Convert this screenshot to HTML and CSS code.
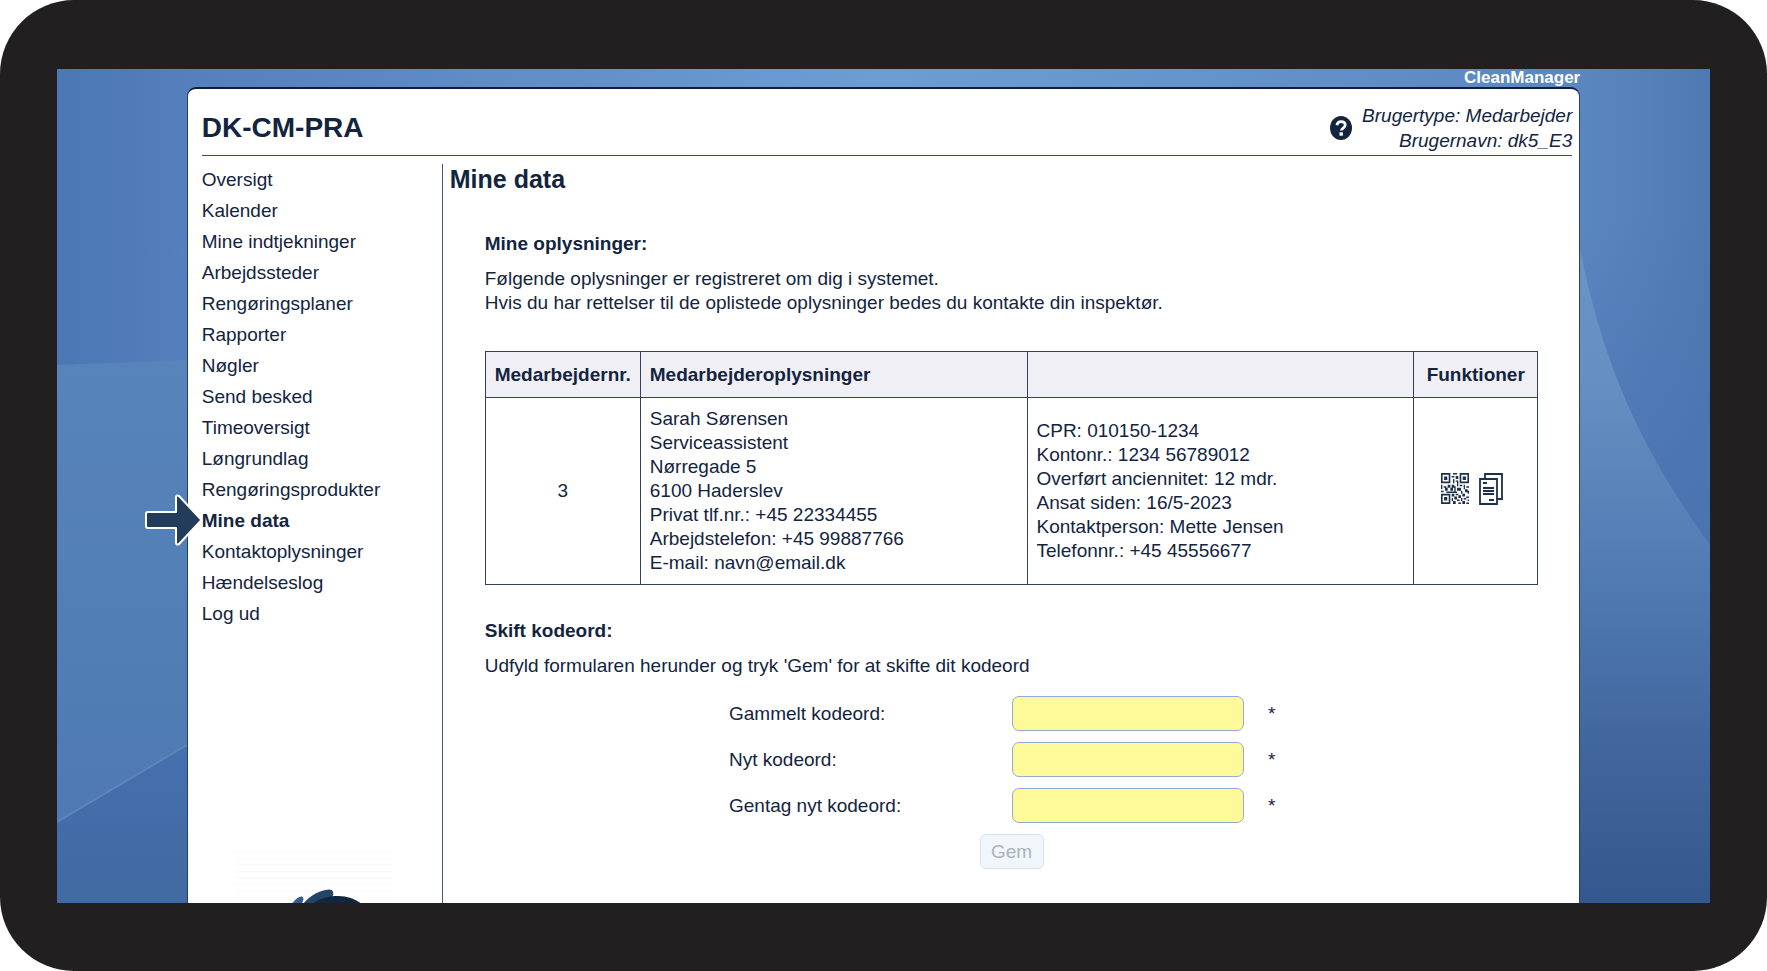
FILE: index.html
```html
<!DOCTYPE html>
<html lang="da">
<head>
<meta charset="utf-8">
<meta name="viewport" content="width=device-width, initial-scale=1">
<title>CleanManager - Mine data</title>
<link rel="stylesheet" href="styles.css">
</head>
<body>
<div class="device">
  <div class="screen">
    <svg class="backdrop" viewBox="0 0 1653 834" preserveAspectRatio="none" aria-hidden="true">
      <defs>
        <linearGradient id="sky" x1="0" y1="0" x2="1" y2="0">
          <stop offset="0" stop-color="#4b77b4"/>
          <stop offset=".08" stop-color="#557fbd"/>
          <stop offset=".5" stop-color="#6e9dd6"/>
          <stop offset=".92" stop-color="#5b87c1"/>
          <stop offset="1" stop-color="#4f79b2"/>
        </linearGradient>
        <linearGradient id="band" x1="0" y1="0" x2="0" y2="1">
          <stop offset="0" stop-color="#5784ba"/>
          <stop offset="1" stop-color="#4d78b2"/>
        </linearGradient>
        <linearGradient id="floor" x1="0" y1="0" x2="0" y2="1">
          <stop offset="0" stop-color="#4670ae"/>
          <stop offset="1" stop-color="#4169a2"/>
        </linearGradient>
        <linearGradient id="shade" x1="0" y1="0" x2="0" y2="1">
          <stop offset="0" stop-color="#4a74b0" stop-opacity="0"/>
          <stop offset="1" stop-color="#4a74b0"/>
        </linearGradient>
        <linearGradient id="curve" x1="0" y1="0" x2="0" y2="1">
          <stop offset="0" stop-color="#6b94c5"/>
          <stop offset=".2" stop-color="#668fc2"/>
          <stop offset=".5" stop-color="#517bb3"/>
          <stop offset=".75" stop-color="#42679e"/>
          <stop offset="1" stop-color="#34588d"/>
        </linearGradient>
      </defs>
      <path fill="url(#sky)" d="M0 0H1653V834H0z"/>
      <path fill="url(#band)" d="M0 296L130 291H400V834H0z"/>
      <path fill="url(#floor)" d="M0 753L130 676H400V834H0z"/>
      <path stroke="#5b86bc" stroke-width="2" d="M0 753L130 676"/>
      <path fill="url(#shade)" d="M1400 150H1653V490H1400z"/>
      <path fill="url(#curve)" d="M1523 180C1545 290 1580 375 1653 476V834H1400V180z"/>
    </svg>

    <div class="page">
      <div class="brand">CleanManager</div>
      <div class="panel">
        <header class="topbar">
          <h1 class="company">DK-CM-PRA</h1>
          <a class="help" href="#hjaelp" aria-label="Hjælp">
            <svg viewBox="0 0 22 24" width="22" height="24" aria-hidden="true">
              <ellipse cx="11" cy="12" rx="11" ry="12" fill="#13243f"/>
              <path d="M6.9 9.2C7.3 6.8 8.8 5.7 11 5.7c2.400 0 4.200 1.300 4.200 3.300 0 3.100-3.800 2.900-3.800 5.600" fill="none" stroke="#fff" stroke-width="2.800"/>
              <path d="M9.500 16.300h3.400v3.400H9.500z" fill="#fff"/>
            </svg>
          </a>
          <p class="user">Brugertype: Medarbejder<br>Brugernavn: dk5_E3</p>
        </header>

        <div class="body">
          <nav class="sidebar" aria-label="Menu">
            <ul class="menu">
              <li><a href="#oversigt">Oversigt</a></li>
              <li><a href="#kalender">Kalender</a></li>
              <li><a href="#indtjekninger">Mine indtjekninger</a></li>
              <li><a href="#arbejdssteder">Arbejdssteder</a></li>
              <li><a href="#rengoeringsplaner">Rengøringsplaner</a></li>
              <li><a href="#rapporter">Rapporter</a></li>
              <li><a href="#noegler">Nøgler</a></li>
              <li><a href="#besked">Send besked</a></li>
              <li><a href="#timeoversigt">Timeoversigt</a></li>
              <li><a href="#loengrundlag">Løngrundlag</a></li>
              <li><a href="#produkter">Rengøringsprodukter</a></li>
              <li class="current">
                <svg class="pointer" viewBox="0 0 58 54" width="58" height="54" aria-hidden="true">
                  <path d="M3 19H31V4.500Q31 1.500 34 3L56.500 27L34 51Q31 52.500 31 49.500V35H3Q1 35 1 33V21Q1 19 3 19z" fill="#243c5c" stroke="#fff" stroke-width="2" stroke-linejoin="round"/>
                </svg>
                <a href="#mine-data" aria-current="page">Mine data</a>
              </li>
              <li><a href="#kontakt">Kontaktoplysninger</a></li>
              <li><a href="#haendelser">Hændelseslog</a></li>
              <li><a href="#logud">Log ud</a></li>
            </ul>
            <svg class="logo" viewBox="0 0 155 100" width="155" height="100" aria-hidden="true">
              <path d="M0 1H155M0 8H155M0 14H155M0 21H155M0 27H155M0 33H155M0 40H155M0 47H155" stroke="#fbfbfb" stroke-width="2"/>
              <path d="M54 54C58 48 62 45 65 45.500C68 47 66 52 60 60z" fill="#345e92"/>
              <path d="M64 56C70 46 82 39 92 38.500C98 38.500 97 45 93 50L80 62z" fill="#244468"/>
              <path d="M68 60C78 48 90 45 101 45C112 45 120 49 126 54V100H68z" fill="#12263f"/>
            </svg>
          </nav>

          <main class="content">
            <h2 class="title">Mine data</h2>

            <section class="section">
              <h3 class="subtitle">Mine oplysninger:</h3>
              <p class="text">Følgende oplysninger er registreret om dig i systemet.<br>Hvis du har rettelser til de oplistede oplysninger bedes du kontakte din inspektør.</p>
              <table class="data">
                <colgroup><col class="col-number"><col><col><col class="col-actions"></colgroup>
                <thead>
                  <tr>
                    <th class="center" scope="col">Medarbejdernr.</th>
                    <th scope="col">Medarbejderoplysninger</th>
                    <th scope="col"></th>
                    <th class="center" scope="col">Funktioner</th>
                  </tr>
                </thead>
                <tbody>
                  <tr>
                    <td class="center">3</td>
                    <td>Sarah Sørensen<br>Serviceassistent<br>Nørregade 5<br>6100 Haderslev<br>Privat tlf.nr.: +45 22334455<br>Arbejdstelefon: +45 99887766<br>E-mail: navn@email.dk</td>
                    <td>CPR: 010150-1234<br>Kontonr.: 1234 56789012<br>Overført anciennitet: 12 mdr.<br>Ansat siden: 16/5-2023<br>Kontaktperson: Mette Jensen<br>Telefonnr.: +45 45556677</td>
                    <td>
                      <div class="actions">
                        <a href="#qr" aria-label="QR-kode">
                          <svg viewBox="0 0 21 21" width="28" height="31" preserveAspectRatio="none" aria-hidden="true">
                            <path fill="none" stroke="#1c2f4c" stroke-width="1.200" d="M.6.6h5.800v5.800H.6zM14.600.6h5.800v5.800h-5.800zM.6 14.600h5.800v5.800H.6z"/>
                            <path fill="#1c2f4c" d="M2.300 2.300h2.400v2.400H2.300zM16.300 2.300h2.400v2.400h-2.400zM2.300 16.300h2.400v2.400H2.300zM9 0h3v1H9zM8 2h2v1H8zM11 2h2v2h-2zM9 4h1v3H9zM11 5h2v1h-2zM12 6h1v3h-1zM0 8h1v3H0zM2 9h2v1H2zM3 10h2v2H3zM5 8h2v2H5zM8 8h2v2H8zM7 10h2v2H7zM10 9h1v4h-1zM12 10h3v2h-3zM14 8h2v1h-2zM17 8h1v3h-1zM19 9h2v1h-2zM18 11h2v2h-2zM0 12h2v1H0zM4 12.500h8v1H4zM15 12h1v2h-1zM20 12h1v2h-1zM8 14h2v2H8zM11 14h2v1h-2zM13 15h2v2h-2zM16 14h2v2h-2zM10 16h2v2h-2zM8 17h1v2H8zM9 19h2v2H9zM12 18h2v1h-2zM15 17h1v2h-1zM17 17h2v1h-2zM13 20h2v1h-2zM16 19h2v2h-2zM19 16h2v1h-2zM20 18h1v1h-1zM19 20h2v1h-2z"/>
                          </svg>
                        </a>
                        <a href="#kopi" aria-label="Dokumenter">
                          <svg viewBox="0 0 24 32" width="24" height="32" aria-hidden="true">
                            <g fill="#fff" stroke="#1c2f4c" stroke-width="1.800">
                              <path d="M6 1H23V26H6z"/>
                              <path d="M1 6H18V31H1z"/>
                              <path d="M4 10H8M4 15H15M4 18H15M4 21H15M10 27H15"/>
                            </g>
                          </svg>
                        </a>
                      </div>
                    </td>
                  </tr>
                </tbody>
              </table>
            </section>

            <section class="section">
              <h3 class="subtitle">Skift kodeord:</h3>
              <p class="text">Udfyld formularen herunder og tryk 'Gem' for at skifte dit kodeord</p>
              <form class="password">
                <div class="row"><label for="old">Gammelt kodeord:</label><input id="old" type="password" required><span>*</span></div>
                <div class="row"><label for="new">Nyt kodeord:</label><input id="new" type="password" required><span>*</span></div>
                <div class="row"><label for="repeat">Gentag nyt kodeord:</label><input id="repeat" type="password" required><span>*</span></div>
                <button class="save" type="submit" disabled>Gem</button>
              </form>
            </section>
          </main>
        </div>
      </div>
    </div>
  </div>
</div>
</body>
</html>
```
FILE: styles.css
```css
* {
  box-sizing: border-box;
}

body {
  margin: 0;
  background: #fff;
  color: #13243f;
  font: 19px/24px "Liberation Sans", Arial, sans-serif;
}

h1, h2, h3, p, ul {
  margin: 0;
  padding: 0;
}

a {
  color: inherit;
  text-decoration: none;
}

svg {
  display: block;
}

.device {
  display: flex;
  height: 100vh;
  padding: 69px 57px 68px;
  border-radius: 74px;
  background: #221f20;
}

.screen {
  position: relative;
  flex: 1;
  overflow: hidden;
  background: #5b87c1;
}

.backdrop {
  position: absolute;
  inset: 0;
  width: 100%;
  height: 100%;
}

.page {
  position: relative;
  display: flex;
  flex-direction: column;
  width: 84.3%;
  height: 100%;
  margin: 0 auto;
}

.brand {
  flex: none;
  color: #fff;
  font-size: 17px;
  font-weight: bold;
  line-height: 18px;
  text-align: right;
}

.panel {
  display: flex;
  flex: 1 0 auto;
  flex-direction: column;
  padding: 14px 7px 0 14px;
  border: 1px solid #23406b;
  border-top: 2px solid #0d1f3f;
  border-bottom: 0;
  border-radius: 9px 9px 0 0;
  background: #fff;
}

.topbar {
  display: flex;
  align-items: center;
  gap: 10px;
  padding-bottom: 2px;
  border-bottom: 1px solid #3c4a62;
}

.company {
  flex: 1;
  font-size: 28px;
  line-height: 48px;
}

.user {
  font-style: italic;
  line-height: 25px;
  text-align: right;
}

.body {
  display: flex;
  flex: 1;
  padding-top: 8px;
}

.sidebar {
  display: flex;
  flex-direction: column;
  width: 241px;
  border-right: 1px solid #4a5670;
}

.menu {
  list-style: none;
  line-height: 31px;
}

.menu li {
  position: relative;
}

.current {
  font-weight: bold;
}

.pointer {
  position: absolute;
  right: 100%;
  top: -12px;
  margin-right: -1px;
}

.logo {
  margin: 222px 0 0 35px;
}

.content {
  flex: 1;
  min-width: 0;
  padding-left: 7px;
}

.title {
  font-size: 25px;
  line-height: 30px;
}

.section {
  margin: 38px 34px 0 35px;
}

.section + .section {
  margin-top: 34px;
}

.subtitle {
  font-size: 19px;
  line-height: 24px;
}

.text {
  margin-top: 11px;
}

.data {
  width: 100%;
  margin-top: 36px;
  border-collapse: collapse;
  table-layout: fixed;
}

.col-number {
  width: 155px;
}

.col-actions {
  width: 124px;
}

.data th,
.data td {
  padding: 9px;
  border: 1px solid #33435f;
  text-align: left;
  vertical-align: middle;
}

.data th {
  height: 46px;
  background: #f0eff5;
  white-space: nowrap;
}

.data .center {
  padding-inline: 0;
  text-align: center;
}

.actions {
  display: flex;
  justify-content: center;
  gap: 10px;
  padding: 0 7px 5px 0;
}

.password {
  display: flex;
  flex-direction: column;
  align-items: center;
  gap: 11px;
  margin-top: 18px;
}

.row {
  display: grid;
  grid-template-columns: 283px 232px 50px;
  align-items: center;
}

.row span {
  padding-left: 24px;
}

.row input {
  width: 100%;
  height: 35px;
  padding: 4px 8px;
  border: 1px solid #90acd6;
  border-radius: 7px;
  background: #fffa99;
  color: inherit;
  font: inherit;
}

.save {
  width: 64px;
  height: 35px;
  padding: 0;
  border: 1px solid #d5e1f1;
  border-radius: 6px;
  background: #f1f6fb;
  color: #abb2bd;
  font: inherit;
}
```
